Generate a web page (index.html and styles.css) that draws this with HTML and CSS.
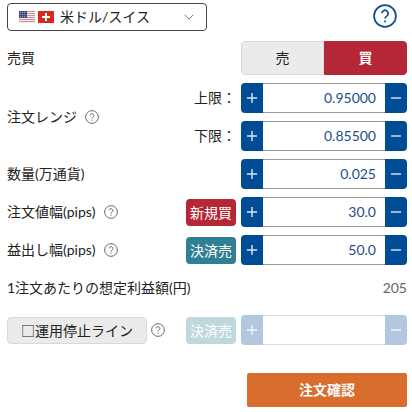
FILE: index.html
```html
<!DOCTYPE html>
<html lang="ja">
<head>
<meta charset="utf-8">
<meta name="viewport" content="width=device-width, initial-scale=1">
<title>注文</title>
<link rel="stylesheet" href="styles.css">
</head>
<body>
<svg class="defs" aria-hidden="true">
  <symbol id="help" viewBox="0 0 24 24">
    <circle cx="12" cy="12" r="10.900"/>
    <path d="M8.800 9.300a3.200 3.200 0 1 1 5 2.800c-1.200.8-1.800 1.300-1.800 2.500"/>
    <path d="M12 16.500v1.800"/>
  </symbol>
  <symbol id="plus" viewBox="0 0 10 10"><path d="M0 5h10M5 0v10"/></symbol>
  <symbol id="minus" viewBox="0 0 10 10"><path d="M0 5h10"/></symbol>
</svg>
<form class="order">
  <header class="top">
    <div class="pair">
      <span class="flags">
        <svg class="flag" viewBox="0 0 16 12" aria-hidden="true">
          <path fill="#f4eeee" d="M0 0h16v12H0z"/>
          <path stroke="#d58d92" d="M0 .5h16M0 2.500h16M0 4.500h16M0 6.500h16M0 8.500h16M0 10.500h16"/>
          <path fill="#3d5288" d="M0 0h8v7H0z"/>
          <path stroke="#8d9cc0" stroke-dasharray="1 1" d="M1 1.500h6M1 3.500h6M1 5.500h6"/>
        </svg>
        <svg class="flag" viewBox="0 0 16 12" aria-hidden="true">
          <path fill="#d52b1e" d="M0 0h16v12H0z"/>
          <path fill="#fff" d="M7 2h2v3h3v2H9v3H7V7H4V5h3z"/>
        </svg>
      </span>
      <select class="pair-select" aria-label="通貨ペア"><option>米ドル/スイス</option></select>
      <svg class="chevron" viewBox="0 0 10 6" aria-hidden="true"><path d="M.7.7 5 5.200 9.300.7"/></svg>
    </div>
    <button type="button" class="help help-large" aria-label="ヘルプ"><svg><use href="#help"/></svg></button>
  </header>

  <div class="row side-row">
    <span class="label">売買</span>
    <div class="sides field" role="group" aria-label="売買">
      <button type="button" class="side">売</button>
      <button type="button" class="side side-buy" aria-pressed="true">買</button>
    </div>
  </div>

  <div class="row">
    <span class="label">注文レンジ <button type="button" class="help" aria-label="注文レンジのヘルプ"><svg><use href="#help"/></svg></button></span>
    <div class="range">
      <div class="range-line">
        <label for="upper">上限：</label>
        <div class="stepper field">
          <button type="button" aria-label="増やす"><svg><use href="#plus"/></svg></button>
          <input id="upper" value="0.95000">
          <button type="button" aria-label="減らす"><svg><use href="#minus"/></svg></button>
        </div>
      </div>
      <div class="range-line">
        <label for="lower">下限：</label>
        <div class="stepper field">
          <button type="button" aria-label="増やす"><svg><use href="#plus"/></svg></button>
          <input id="lower" value="0.85500">
          <button type="button" aria-label="減らす"><svg><use href="#minus"/></svg></button>
        </div>
      </div>
    </div>
  </div>

  <div class="row">
    <label class="label" for="amount">数量(万通貨)</label>
    <div class="stepper field">
      <button type="button" aria-label="増やす"><svg><use href="#plus"/></svg></button>
      <input id="amount" value="0.025">
      <button type="button" aria-label="減らす"><svg><use href="#minus"/></svg></button>
    </div>
  </div>

  <div class="row">
    <span class="label"><label for="step">注文値幅(pips)</label> <button type="button" class="help" aria-label="注文値幅のヘルプ"><svg><use href="#help"/></svg></button></span>
    <span class="tag tag-new">新規買</span>
    <div class="stepper field">
      <button type="button" aria-label="増やす"><svg><use href="#plus"/></svg></button>
      <input id="step" value="30.0">
      <button type="button" aria-label="減らす"><svg><use href="#minus"/></svg></button>
    </div>
  </div>

  <div class="row">
    <span class="label"><label for="profit">益出し幅(pips)</label> <button type="button" class="help" aria-label="益出し幅のヘルプ"><svg><use href="#help"/></svg></button></span>
    <span class="tag tag-close">決済売</span>
    <div class="stepper field">
      <button type="button" aria-label="増やす"><svg><use href="#plus"/></svg></button>
      <input id="profit" value="50.0">
      <button type="button" aria-label="減らす"><svg><use href="#minus"/></svg></button>
    </div>
  </div>

  <div class="row estimate">
    <span class="label">1注文あたりの想定利益額(円)</span>
    <output class="result">205</output>
  </div>

  <div class="row">
    <span class="label stop"><button type="button" class="stop-button">□運用停止ライン</button><button type="button" class="help" aria-label="運用停止ラインのヘルプ"><svg><use href="#help"/></svg></button></span>
    <span class="tag tag-close disabled">決済売</span>
    <div class="stepper field disabled">
      <button type="button" aria-label="増やす" disabled><svg><use href="#plus"/></svg></button>
      <input aria-label="運用停止ライン" disabled>
      <button type="button" aria-label="減らす" disabled><svg><use href="#minus"/></svg></button>
    </div>
  </div>

  <button type="button" class="submit">注文確認</button>
</form>
</body>
</html>
```
FILE: styles.css
```css
* { box-sizing: border-box; }

body {
  margin: 0;
  background: #fff;
  color: #222;
  font: 14px/20px Lato, "Noto Sans CJK JP", sans-serif;
}

button, input, select {
  margin: 0;
  padding: 0;
  border: 0;
  font: inherit;
  color: inherit;
}

svg { display: block; fill: none; }

.defs { position: absolute; width: 0; height: 0; }

.order {
  display: flex;
  flex-direction: column;
  gap: 8px;
  padding: 3px 5px 5px 7px;
}

.top {
  display: flex;
  justify-content: space-between;
  align-items: flex-start;
  padding-right: 10px;
}

.pair { position: relative; width: 200px; }

.pair-select {
  display: block;
  width: 100%;
  height: 28px;
  padding-left: 52px;
  appearance: none;
  background: #fff;
  border: 1px solid #444;
  border-radius: 4px;
}

.flags {
  position: absolute;
  top: 8px;
  left: 12px;
  display: flex;
  gap: 3px;
  pointer-events: none;
}

.flag { width: 16px; height: 12px; }

.chevron {
  position: absolute;
  top: 11px;
  right: 13px;
  width: 10px;
  height: 6px;
  stroke: #777;
  pointer-events: none;
}

.help {
  flex: none;
  width: 14px;
  height: 14px;
  background: none;
  color: #666;
}

.help svg {
  width: 100%;
  height: 100%;
  stroke: currentColor;
  stroke-width: 1.7;
}

.help-large { width: 24px; height: 24px; margin-top: 1px; color: #0b4c92; }

.row { display: flex; align-items: center; gap: 5px; }

.side-row { margin-top: 2px; }

.label {
  flex: 1;
  display: flex;
  align-items: center;
  gap: 8px;
  white-space: nowrap;
}

.field { flex: none; width: 166px; }

.sides { display: flex; height: 34px; }

.side {
  flex: 1;
  background: #ebebeb;
  border: 1px solid #d9d9d9;
  border-radius: 4px 0 0 4px;
}

.side-buy {
  background: #b32737;
  border-color: #b32737;
  border-radius: 0 4px 4px 0;
  color: #fff;
  font-weight: 700;
}

.range { display: flex; flex-direction: column; gap: 8px; }

.range-line { display: flex; align-items: center; gap: 5px; }

.stepper { display: flex; height: 30px; }

.stepper button {
  flex: none;
  display: flex;
  align-items: center;
  justify-content: center;
  width: 22px;
  background: #004c97;
  border-radius: 4px 0 0 4px;
}

.stepper button:last-child { border-radius: 0 4px 4px 0; }

.stepper svg { width: 10px; height: 10px; stroke: #dce7f3; stroke-width: 1.4; }

.stepper input {
  flex: 1;
  min-width: 0;
  padding: 0 9px;
  background: #fff;
  border: solid #999;
  border-width: 1px 0;
  color: #1d4e89;
  text-align: right;
}

.tag {
  width: 50px;
  height: 27px;
  border-radius: 4px;
  color: #fff;
  line-height: 27px;
  text-align: center;
}

.tag-new { background: #b32737; }
.tag-close { background: #2f8092; }
.disabled { opacity: 0.3; }

.estimate { min-height: 30px; margin-bottom: 4px; }

.result { color: #666; }

.stop { gap: 4px; }

.stop-button {
  width: 140px;
  height: 27px;
  background: #ebebeb;
  border: 1px solid #d9d9d9;
  border-radius: 4px;
  font-family: "Noto Sans CJK JP", sans-serif;
}

.submit {
  align-self: flex-end;
  width: 160px;
  height: 34px;
  margin-top: 20px;
  background: #d96d2d;
  border-radius: 2px;
  color: #fff;
  font-weight: 700;
}
```
